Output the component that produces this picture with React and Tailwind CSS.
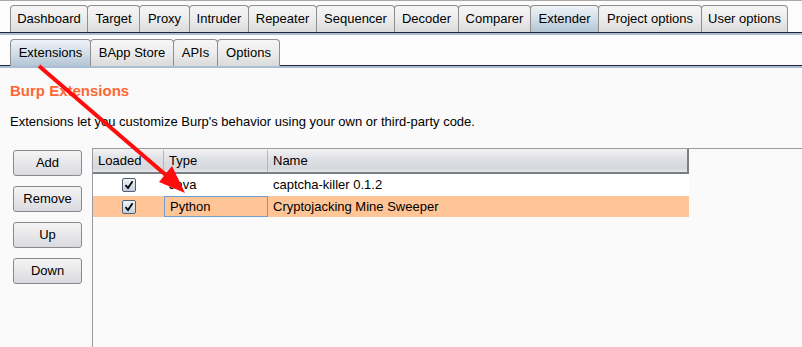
import React from 'react';

const TOP_TABS = [
  { label: 'Dashboard', w: 78 },
  { label: 'Target', w: 53 },
  { label: 'Proxy', w: 51 },
  { label: 'Intruder', w: 60 },
  { label: 'Repeater', w: 69 },
  { label: 'Sequencer', w: 79 },
  { label: 'Decoder', w: 65 },
  { label: 'Comparer', w: 73 },
  { label: 'Extender', w: 69, active: true },
  { label: 'Project options', w: 104 },
  { label: 'User options', w: 87 },
];

const SUB_TABS = [
  { label: 'Extensions', w: 81, active: true },
  { label: 'BApp Store', w: 84 },
  { label: 'APIs', w: 45 },
  { label: 'Options', w: 63 },
];

const BUTTONS = ['Add', 'Remove', 'Up', 'Down'];

const ROWS = [
  { type: 'Java', name: 'captcha-killer 0.1.2' },
  { type: 'Python', name: 'Cryptojacking Mine Sweeper', selected: true },
];

function Tab({ label, w, active }) {
  return (
    <div
      style={{ width: w }}
      className={`-mr-px flex h-[27px] shrink-0 items-center justify-center rounded-t-[4px] border border-b-0 border-[#8e8e8e] text-[13px] text-black ${
        active
          ? 'bg-[linear-gradient(180deg,#eef3f7_0%,#d3dee8_50%,#b3c4d4_100%)]'
          : 'bg-[linear-gradient(180deg,#f6f6f6_0%,#ececec_50%,#dadada_100%)]'
      }`}
    >
      {label}
    </div>
  );
}

function Check() {
  return (
    <div className="flex h-[14px] w-[14px] items-center justify-center rounded-[2px] border border-[#4f5f73] bg-[linear-gradient(180deg,#f0f4f8_0%,#c3cfdb_100%)]">
      <svg width="10" height="10" viewBox="0 0 10 10">
        <path d="M1.5 5.2 L4 8 L8.6 1.2" fill="none" stroke="#000" strokeWidth="1.8" />
      </svg>
    </div>
  );
}

export default function App() {
  return (
    <div className="relative h-[347px] w-[802px] overflow-hidden bg-[#fafafa] font-['Liberation_Sans',Arial,sans-serif]">
      <div className="h-[5px] border-t border-[#a9a9a9] bg-[#fcfcfc]" />
      <div className="flex h-[27px] bg-[#fcfcfc] pl-[10px]">
        {TOP_TABS.map(t => <Tab key={t.label} {...t} />)}
      </div>
      <div className="h-px bg-[#1e2536]" />
      <div className="h-[2px] bg-[#a9bed3]" />

      <div className="h-[4px] bg-[#fcfcfc]" />
      <div className="flex h-[26px] bg-[#fcfcfc] pl-[10px]">
        {SUB_TABS.map(t => <Tab key={t.label} {...t} />)}
      </div>
      <div className="h-px bg-[#1e2536]" />
      <div className="h-[2px] bg-[#a9bed3]" />

      <div className="pl-[10px] pt-[14px] text-[15px] font-bold leading-[18px] text-[#ff6633]">Burp Extensions</div>
      <div className="pl-[10px] pt-[14px] text-[13px] leading-[16px] text-black">
        Extensions let you customize Burp's behavior using your own or third-party code.
      </div>

      <div className="mt-[18px] flex h-[200px]">
        <div className="flex w-[92px] shrink-0 flex-col gap-[10px] pl-[13px] pt-[2px]">
          {BUTTONS.map(b => (
            <div
              key={b}
              className="flex h-[26px] w-[69px] items-center justify-center rounded-[3px] border border-[#8a8a8a] bg-[linear-gradient(180deg,#f4f4f4_0%,#e8e8ea_50%,#d9dadf_100%)] text-[13px] text-black"
            >
              {b}
            </div>
          ))}
        </div>
        <div className="flex-1 border-l border-t border-[#9a9aa0] bg-[#fafafa]">
          <div className="w-[596px]">
            <div className="flex h-[25px] border-b-2 border-r-2 border-[#7c7e86] bg-[linear-gradient(180deg,#f3f3f5_0%,#dfe0e4_45%,#d6d8dd_85%,#e6e8ec_100%)] pt-px text-[13px] text-black">
              <div className="flex w-[71px] items-center border-r border-[#b4b6bc] pl-[5px]">Loaded</div>
              <div className="flex w-[104px] items-center border-r border-[#b4b6bc] pl-[5px]">Type</div>
              <div className="flex flex-1 items-center pl-[5px]">Name</div>
            </div>
            {ROWS.map((r, i) => (
              <div
                key={r.name}
                className={`flex text-[13px] text-black ${i === 0 ? 'h-[22px]' : 'h-[21px]'} ${r.selected ? 'bg-[#ffc597]' : 'bg-white'}`}
              >
                <div className="flex w-[71px] items-center justify-center pl-px">
                  <Check />
                </div>
                <div
                  className={`flex w-[104px] items-center pl-[5px] ${r.selected ? 'border border-[#6f9fd0]' : ''}`}
                >
                  {r.type}
                </div>
                <div className="flex flex-1 items-center pl-[5px]">{r.name}</div>
              </div>
            ))}
          </div>
        </div>
      </div>

      <svg className="pointer-events-none absolute left-0 top-0" width="802" height="347">
        <line x1="39" y1="66" x2="167" y2="176" stroke="#ff0d0d" strokeWidth="4" />
        <polygon points="185,193 159,182 172,166" fill="#ff0d0d" />
      </svg>
    </div>
  );
}
